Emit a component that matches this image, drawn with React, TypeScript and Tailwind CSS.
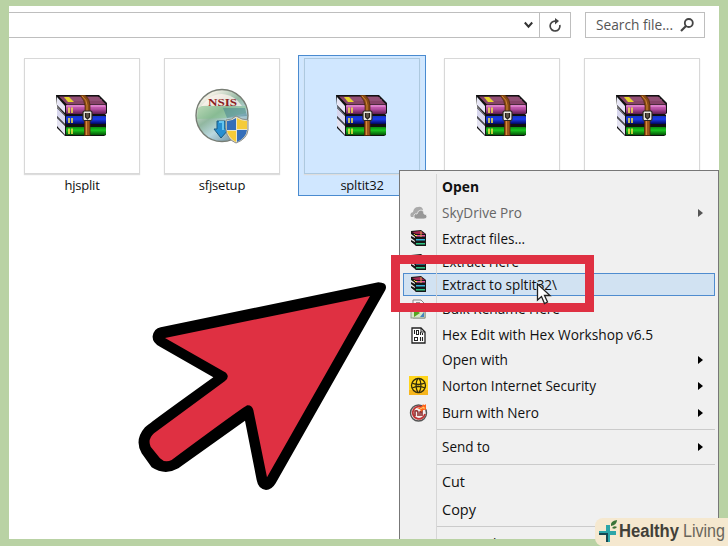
import React from "react";

function Archive() {
  return (
    <svg width="52" height="42" viewBox="0 0 52 42">
      <defs>
        <linearGradient id="plum" x1="0" y1="0" x2="0" y2="1">
          <stop offset="0" stopColor="#d66bbf" />
          <stop offset=".45" stopColor="#b44d9f" />
          <stop offset="1" stopColor="#5d1c50" />
        </linearGradient>
        <linearGradient id="navy" x1="0" y1="0" x2="0" y2="1">
          <stop offset="0" stopColor="#1535c4" />
          <stop offset=".4" stopColor="#1a3bea" />
          <stop offset="1" stopColor="#020760" />
        </linearGradient>
        <linearGradient id="leaf" x1="0" y1="0" x2="0" y2="1">
          <stop offset="0" stopColor="#0a8c0e" />
          <stop offset=".4" stopColor="#19c51f" />
          <stop offset="1" stopColor="#045307" />
        </linearGradient>
      </defs>
      <path d="M1 22 9 30H50V40L48 41H9L1 33Z" fill="#111" />
      <path d="M1 23 9 31V40L1 31Z" fill="#e4e3f2" />
      <path d="M1 12 9 20H50V30H9L1 22Z" fill="#111" />
      <path d="M1 13 9 21V29L1 21Z" fill="#d8d7ee" />
      <path d="M0 0H43L51 8V18L49 20H9L1 11Z" fill="#111" />
      <path d="M1 2 9 11V18L1 10Z" fill="#e7e6f5" />
      <path d="M3 1.5H42L50 9.5H11Z" fill="#874368" />
      <path d="M8 3H44M10 5H46" stroke="#9e5c80" strokeWidth="1" />
      <rect x="10" y="10" width="40" height="9" rx="1" fill="url(#plum)" />
      <rect x="10" y="21" width="40" height="8" rx="1" fill="url(#navy)" />
      <rect x="10" y="32" width="40" height="8" rx="1" fill="url(#leaf)" />
      <path d="M10 11H49" stroke="#f0a5e2" strokeWidth=".8" />
      <path d="M8 2H13L18 7H12Z" fill="#e5d52a" />
      <path d="M13 12.5V18M16 12.5V18M13 23V28M16 23V28M13 33.5V39M16 33.5V39" stroke="#efe04a" strokeWidth="1.6" />
      <path d="M24 0H29Q34 4 34 10V19H29V11Q29 6 24 0Z" fill="#884915" stroke="#4e2607" strokeWidth=".7" />
      <path d="M26 1Q31 5 31 10V17" fill="none" stroke="#d18a35" />
      <rect x="28.5" y="25" width="5.5" height="15.5" fill="#9e561c" stroke="#4c2408" strokeWidth=".8" />
      <path d="M30.5 26V40" stroke="#d78b3c" />
      <rect x="27" y="16" width="9" height="9.5" rx="1.5" fill="#e9e6dc" stroke="#2a2520" strokeWidth="1.2" />
      <path d="M29.5 18V22L31.5 24 33.5 22V18" fill="#5d5348" stroke="#241f1a" strokeWidth="1.2" />
    </svg>
  );
}

function Nsis() {
  return (
    <svg width="54" height="56" viewBox="0 0 54 56">
      <defs>
        <linearGradient id="disc" x1="0" y1="0" x2=".7" y2="1">
          <stop offset="0" stopColor="#cfd2bd" />
          <stop offset=".2" stopColor="#f1efe4" />
          <stop offset=".5" stopColor="#91b7a0" />
          <stop offset=".72" stopColor="#bad8e0" />
          <stop offset="1" stopColor="#7194a5" />
        </linearGradient>
      </defs>
      <circle cx="27" cy="27.5" r="26" fill="url(#disc)" stroke="#777d74" strokeWidth="1.4" />
      <path d="M3 20Q16 13 27 19L51 18V25L31 30 2 31Z" fill="#7ec184" opacity=".45" />
      <path d="M28 20H50L52 28 32 30Z" fill="#427f8f" opacity=".5" />
      <path d="M14 10Q28 1 42 12L47 18H6Z" fill="#fff3ed" opacity=".75" />
      <text x="13" y="17.5" textLength="29" lengthAdjust="spacingAndGlyphs" className="font-['Liberation_Serif',serif] text-[11px] font-bold" fill="#8b1e25">NSIS</text>
      <path d="M22 33H30V41H34L26 50 19 41H22Z" fill="#278fd1" stroke="#1a587f" />
      <path d="M24 34H28V42" fill="none" stroke="#66c5ef" strokeWidth="2" />
      <path d="M41 28Q47 32 53 32V42Q52 51 41 55Q32 51 31 42V32Q37 32 41 28Z" fill="#e8e4cb" stroke="#8b8c88" />
      <path d="M41 30V42H32V33Q37 33 41 30ZM42 42H52Q51 50 42 54Z" fill="#346eb9" />
      <path d="M42 30Q46 33 52 33V41H42ZM32 43H41V54Q34 50 32 43Z" fill="#f5cb39" />
    </svg>
  );
}

function Books() {
  return (
    <svg width="17" height="17" viewBox="0 0 17 17">
      <path d="M1 1 11 0 16 4V16H6L1 12Z" fill="#171717" />
      <path d="m2 2 8-1 5 3H6Z" fill="#a3264e" />
      <path d="M6 5H15V6.5H6Z" fill="#e45599" />
      <path d="M3 4H5V6H7V5" fill="#ffe14b" />
      <path d="M6 9H15V10.5H6Z" fill="#39b6df" />
      <path d="M6 13H15V14.5H6Z" fill="#2fc785" />
      <path d="m1 4 4 3v1L1 6m0 2 4 3v1L1 10m0 2 4 3v1l-4-3" fill="#ededed" />
      <path d="M11 1V7" stroke="#e3a650" />
    </svg>
  );
}

function Clouds() {
  return (
    <svg width="17" height="14" viewBox="0 0 17 14">
      <path d="M3 11H1Q-1 7 3 6Q4 1 8 1Q12 0 13 4" fill="#aaa" />
      <path d="M6 13Q3 12 4 9Q5 7 7 8Q8 4 11 4Q14 4 14 8Q17 8 17 11Q16 13 14 13Z" fill="#989898" stroke="#eee" strokeWidth=".8" />
    </svg>
  );
}

function Rename() {
  return (
    <svg width="16" height="20" viewBox="0 0 16 20">
      <path d="M3 1H11L15 5V19H3Z" fill="#f5f5f5" stroke="#888" />
      <path d="M6 4H10V7" fill="none" stroke="#333" />
      <rect x="1" y="10" width="14" height="9" fill="#d7e8c7" stroke="#8d998a" />
      <path d="m4 10 6 4-6 4Z" fill="#55a51f" />
      <path d="m10 18 4-5v5" fill="#4782bd" />
    </svg>
  );
}

function HexFile() {
  return (
    <svg width="15" height="17" viewBox="0 0 15 17">
      <path d="M1 1H10L14 5V16H1Z" fill="#fff" stroke="#222" strokeWidth="1.3" />
      <path d="M10 1V5H14" fill="none" stroke="#222" />
      <path d="M3.5 3V7M9.5 5V8M11.5 6V8M9.5 10V14M11.5 10V14" stroke="#222" strokeWidth="1.1" />
      <rect x="5.5" y="3.5" width="2" height="4" fill="none" stroke="#222" />
      <rect x="3.5" y="10.5" width="3" height="3" fill="none" stroke="#222" />
    </svg>
  );
}

function Norton() {
  return (
    <svg width="19" height="19" viewBox="0 0 19 19">
      <path d="M0 0H19V19H0Z" fill="#ffd51c" />
      <path d="M0 14H19V19H0Z" fill="#f6b51d" />
      <g fill="none" stroke="#302c0c" strokeWidth="1.3">
        <circle cx="9.5" cy="9.5" r="7" />
        <path d="M3 7Q9 10 16 7M3 12Q10 9 16 12M9 2Q5 9 9 17M10 2Q14 9 10 17" />
      </g>
    </svg>
  );
}

function Nero() {
  return (
    <svg width="19" height="19" viewBox="0 0 19 19">
      <circle cx="9.5" cy="10" r="8" fill="#f5efee" stroke="#555" strokeWidth="1.4" />
      <path d="M14 5A6.2 6.2 0 1 0 16 11" fill="none" stroke="#be3435" strokeWidth="1.8" />
      <path d="M6 13V8Q9 7 9 10V13M11 13V9L13 8V13" fill="none" stroke="#8f3030" strokeWidth="1.6" />
      <path d="M8 5Q13 5 14 1Q15 3 17 1L17 7Q14 6 12 9Q12 6 8 5Z" fill="#ff641b" />
      <path d="m11 6 4-2v2" stroke="#ffd16d" fill="none" />
    </svg>
  );
}

const box = "flex h-[116px] w-[116px] shrink-0 items-center justify-center border shadow-[0_1px_1px_#ddd]";

function Tile({ name, selected, children }: { name?: string; selected?: boolean; children: React.ReactNode }) {
  return (
    <div className={selected ? "flex h-[141px] w-[128px] shrink-0 flex-col items-center border border-[#4a8bd0] bg-[#d0e7ff] pt-[2px]" : "flex h-[141px] w-[128px] shrink-0 flex-col items-center pt-[3px]"}>
      <div className={box + (selected ? " border-[#adc9df]" : " border-[#d8d8d8] bg-white")}>{children}</div>
      <span className="mt-px text-[13px] leading-5 tracking-[-0.2px]">{name}</span>
    </div>
  );
}

function Item({ h, label, w, icon, arrow, muted, bold, active }: { h: string; label: string; w: number; icon?: React.ReactNode; arrow?: boolean; muted?: boolean; bold?: boolean; active?: boolean }) {
  return (
    <div className={h + " flex shrink-0 items-center px-[3px]"}>
      <div className={"flex h-full w-full items-center border " + (active ? "border-[#4f8ccf] bg-[#d1e2f2]" : "border-transparent")}>
        <div className="flex w-[28px] justify-center">{icon}</div>
        <svg className="ml-[10px] shrink-0 overflow-visible" width={w} height="20">
          <text x="0" y="15" textLength={w} lengthAdjust="spacingAndGlyphs" className={bold ? "text-[14px] font-bold" : "text-[14px]"} fill={muted ? "#666" : "#111"}>{label}</text>
        </svg>
        {arrow && (
          <svg className="mr-[11px] ml-auto" width="5" height="8" viewBox="0 0 5 8">
            <path d="M0 0 5 4 0 8Z" fill={muted ? "#555" : "#000"} />
          </svg>
        )}
      </div>
    </div>
  );
}

function Rule() {
  return <div className="my-[3px] ml-[37px] mr-[3px] h-px shrink-0 bg-[#cbcbcb]" />;
}

export default function App() {
  return (
    <div className="relative h-[546px] w-[728px] overflow-hidden bg-[#b9d2a4] pt-[6px] pl-[9px] font-['Open_Sans','Noto_Sans',sans-serif] text-[#111]">
      <main className="relative h-[533px] w-[710px] overflow-hidden bg-white">
        <header className="flex h-[32px] pt-[6px]">
          <div className="flex h-[26px] w-[562px] border border-l-0 border-[#bebebe]">
            <div className="flex flex-1 items-center justify-end pr-[6px]">
              <svg width="9" height="8" viewBox="0 0 9 8"><path d="m.8 1.5 3.7 4.2 3.7-4.2" fill="none" stroke="#333" strokeWidth="2" /></svg>
            </div>
            <div className="flex w-[31px] items-center justify-center border-l border-[#bebebe]">
              <svg width="14" height="15" viewBox="0 0 14 15">
                <path d="M7.5 3.2A4.9 4.9 0 1 0 11.8 7" fill="none" stroke="#444" strokeWidth="1.7" />
                <path d="m7 0 4 3-4 3.5Z" fill="#444" />
              </svg>
            </div>
          </div>
          <div className="ml-[14px] flex h-[26px] w-[120px] items-center border border-[#bebebe] pl-[10px]">
            <svg className="overflow-visible" width="77" height="20">
              <text x="0" y="15" textLength="77" lengthAdjust="spacingAndGlyphs" fill="#555" className="text-[14px]">Search file...</text>
            </svg>
            <svg className="ml-[7px]" width="14" height="14" viewBox="0 0 14 14"><circle cx="8.8" cy="5" r="4" fill="none" stroke="#444" strokeWidth="1.8" /><path d="M6 8 1 13" stroke="#444" strokeWidth="2.2" /></svg>
          </div>
        </header>
        <div className="mt-[17px] ml-[9px] flex gap-[12px]">
          <Tile name="hjsplit"><Archive /></Tile>
          <Tile name="sfjsetup"><Nsis /></Tile>
          <Tile name="spltit32" selected><Archive /></Tile>
          <Tile><Archive /></Tile>
          <Tile><Archive /></Tile>
        </div>

        <nav className="absolute top-[164px] left-[390px] flex h-[390px] w-[320px] flex-col border border-[#777] bg-[#f0f0f0] pt-[3px]">
          <div className="absolute top-[3px] bottom-0 left-[36px] w-px bg-[#d6d6d6]" />
          <Item h="h-[26px]" label="Open" w={37} bold />
          <Item h="h-[26px]" label="SkyDrive Pro" w={80} icon={<Clouds />} muted arrow />
          <Item h="h-[25px]" label="Extract files..." w={83} icon={<Books />} />
          <Item h="h-[22px]" label="Extract Here" w={77} icon={<Books />} />
          <Item h="h-[23px]" label="Extract to spltit32\" w={115} icon={<Books />} active />
          <Item h="h-[26px]" label="Bulk Rename Here" w={118} icon={<Rename />} />
          <Item h="h-[26px]" label="Hex Edit with Hex Workshop v6.5" w={211} icon={<HexFile />} />
          <Item h="h-[24px]" label="Open with" w={66} arrow />
          <Item h="h-[27px]" label="Norton Internet Security" w={154} icon={<Norton />} arrow />
          <Item h="h-[27px]" label="Burn with Nero" w={97} icon={<Nero />} arrow />
          <Rule />
          <Item h="h-[28px]" label="Send to" w={48} arrow />
          <Rule />
          <Item h="h-[28px]" label="Cut" w={23} />
          <Item h="h-[27px]" label="Copy" w={34} />
          <Rule />
          <Item h="h-[28px]" label="Create shortcut" w={97} />
        </nav>
      </main>

      <div className="absolute top-[255px] left-[391px] h-[57px] w-[203px] border-[9px] border-[#df3042]" />
      <svg className="absolute top-[283px] left-[536px]" width="17" height="22" viewBox="0 0 17 22">
        <path d="M1.5 1V17L5.5 13.5 8.5 20.5 11.5 19 8.5 12.5H14Z" fill="#fff" stroke="#222" strokeWidth="1.3" />
      </svg>
      <svg className="absolute top-[270px] left-[130px]" width="280" height="230" viewBox="0 0 840 690">
        <path d="M92 172 745 37Q775 38 766 60L437 640Q425 660 408 660Q385 658 380 630L345 452 145 595Q105 618 65 592L35 550Q12 510 45 472Q55 462 250 322L90 230Q66 218 68 198Q72 176 92 172Z" />
        <path d="M105 204 720 78 411 622 370 420Q366 405 352 406Q345 407 125 570Q105 580 90 565L62 530Q52 508 72 490L285 333Q300 322 288 308Z" fill="#df3042" />
      </svg>

      <footer className="absolute top-[518px] left-[595px] flex h-[28px] w-[133px] items-center rounded-l-[8px] bg-[#f5e8cf] pl-[4px]">
        <svg width="19" height="24" viewBox="0 0 19 24">
          <path d="M0 11H7V5H11V11H17V15H11V22H7V15H0Z" fill="#2ca5a8" />
          <path d="M0 13H9V22H7V15H0Z" fill="#174853" />
          <path d="M12 6Q11 1 18 0Q18 5 12 6Z" fill="#3a7438" />
          <path d="M13 8Q15 5 18 7Q16 10 13 8Z" fill="#3a7438" />
        </svg>
        <svg className="ml-px overflow-visible" width="108" height="26">
          <text x="0" y="18" textLength="60" lengthAdjust="spacingAndGlyphs" fill="#414039" className="font-['Liberation_Sans',sans-serif] text-[18px] font-bold">Healthy</text>
          <text x="64" y="18" textLength="42" lengthAdjust="spacingAndGlyphs" fill="#69655b" className="font-['Liberation_Sans',sans-serif] text-[18px]">Living</text>
        </svg>
      </footer>
    </div>
  );
}
